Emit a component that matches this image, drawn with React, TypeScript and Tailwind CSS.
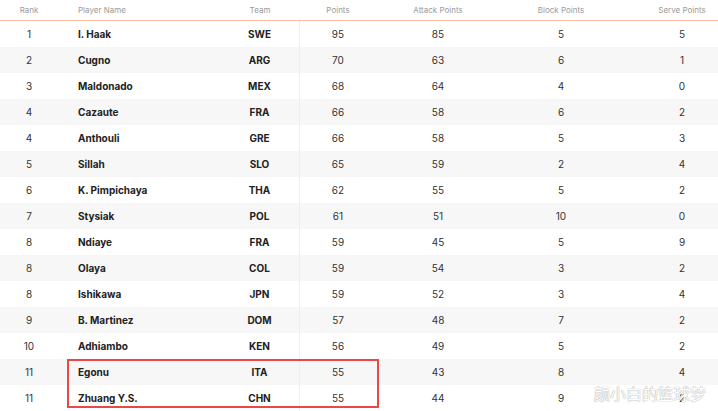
import React from "react";

const rows: [string, string, string, string, string, string, string][] = [
  ["1", "I. Haak", "SWE", "95", "85", "5", "5"],
  ["2", "Cugno", "ARG", "70", "63", "6", "1"],
  ["3", "Maldonado", "MEX", "68", "64", "4", "0"],
  ["4", "Cazaute", "FRA", "66", "58", "6", "2"],
  ["4", "Anthouli", "GRE", "66", "58", "5", "3"],
  ["5", "Sillah", "SLO", "65", "59", "2", "4"],
  ["6", "K. Pimpichaya", "THA", "62", "55", "5", "2"],
  ["7", "Stysiak", "POL", "61", "51", "10", "0"],
  ["8", "Ndiaye", "FRA", "59", "45", "5", "9"],
  ["8", "Olaya", "COL", "59", "54", "3", "2"],
  ["8", "Ishikawa", "JPN", "59", "52", "3", "4"],
  ["9", "B. Martinez", "DOM", "57", "48", "7", "2"],
  ["10", "Adhiambo", "KEN", "56", "49", "5", "2"],
  ["11", "Egonu", "ITA", "55", "43", "8", "4"],
  ["11", "Zhuang Y.S.", "CHN", "55", "44", "9", "2"],
];

const grid = "grid grid-cols-[58px_162px_80px_76px_124px_122px_96px]";

export default function App() {
  return (
    <div className="relative w-[718px] h-[411px] overflow-hidden bg-white font-['Inter',sans-serif]">
      <div className={`${grid} h-[21px] items-center border-b border-[#ffbba3] text-[8px] text-[#9a9a9a]`}>
        <div className="text-center">Rank</div>
        <div className="pl-[20px]">Player Name</div>
        <div className="text-center">Team</div>
        <div className="text-center">Points</div>
        <div className="text-center">Attack Points</div>
        <div className="text-center">Block Points</div>
        <div className="text-center pl-[24px]">Serve Points</div>
      </div>
      {rows.map((r, i) => (
        <div
          key={i}
          className={`${grid} h-[26px] items-center text-[10px] text-[#333] ${i % 2 === 1 ? "bg-[#f7f7f7]" : "bg-white"}`}
        >
          <div className="text-center">{r[0]}</div>
          <div className="pl-[20px] font-bold text-[#222]">{r[1]}</div>
          <div className="text-center font-bold text-[#222] h-full flex items-center justify-center border-r border-[#eeeeee]">{r[2]}</div>
          <div className="text-center">{r[3]}</div>
          <div className="text-center">{r[4]}</div>
          <div className="text-center">{r[5]}</div>
          <div className="text-center pl-[24px]">{r[6]}</div>
        </div>
      ))}
      <div className="absolute left-[67px] top-[359px] w-[312px] h-[49px] border-2 border-[#e84848]" />
      <div className="absolute left-[594px] top-[381px] text-[16px] text-white font-['Noto_Sans_CJK_SC',sans-serif] [text-shadow:0_0_1px_#aaa,0_0_1px_#aaa]">
        颜小白的篮球梦
      </div>
    </div>
  );
}
